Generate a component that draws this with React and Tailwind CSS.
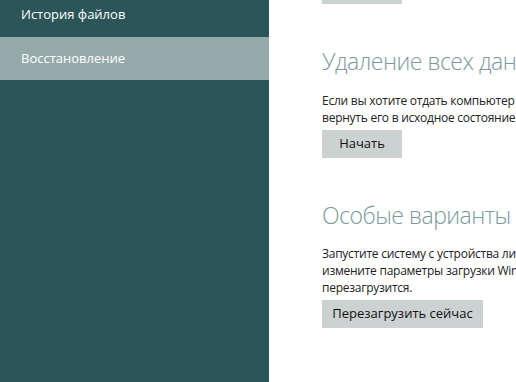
export default function App() {
  return (
    <div
      className="flex w-[516px] h-[382px] overflow-hidden bg-white"
      style={{ fontFamily: '"Open Sans", "Noto Sans", sans-serif' }}
    >
      <aside className="w-[269px] shrink-0 bg-[#2c5558] flex flex-col">
        <div className="h-[37px] flex items-center pl-[21px] pb-[8px] text-[13px] text-white">
          История файлов
        </div>
        <div className="h-[43px] flex items-center pl-[21px] text-[13px] text-white bg-[#95a9aa]">
          Восстановление
        </div>
      </aside>
      <main className="flex-1 min-w-0 pl-[53px] flex flex-col overflow-hidden">
        <div className="w-[80px] h-[4px] bg-[#ccd1d1] shrink-0" />
        <h2 className="mt-[41px] text-[23px] leading-[32px] font-light tracking-[-0.5px] text-[#7a9a9c] whitespace-nowrap">
          Удаление всех данных и переустановка Windows
        </h2>
        <div className="mt-[15px] text-[12px] leading-[17px] tracking-[-0.25px] text-[#222] whitespace-nowrap">
          <p>Если вы хотите отдать компьютер другому человеку или начать работу с ним с нуля, можно</p>
          <p>вернуть его в исходное состояние.</p>
        </div>
        <button className="mt-[4px] w-[80px] h-[28px] bg-[#ccd1d1] text-[13px] text-[#111] shrink-0">
          Начать
        </button>
        <h2 className="mt-[41px] text-[23px] leading-[32px] font-light tracking-[-0.5px] text-[#7a9a9c] whitespace-nowrap">
          Особые варианты загрузки
        </h2>
        <div className="mt-[14px] text-[12px] leading-[17px] tracking-[-0.25px] text-[#222] whitespace-nowrap">
          <p>Запустите систему с устройства либо диска (например, USB-накопителя или DVD-диска),</p>
          <p>измените параметры загрузки Windows или восстановите Windows из образа системы. Компьютер</p>
          <p>перезагрузится.</p>
        </div>
        <button className="mt-[4px] w-[161px] h-[28px] bg-[#ccd1d1] text-[13px] text-[#111] shrink-0">
          Перезагрузить сейчас
        </button>
      </main>
    </div>
  );
}
